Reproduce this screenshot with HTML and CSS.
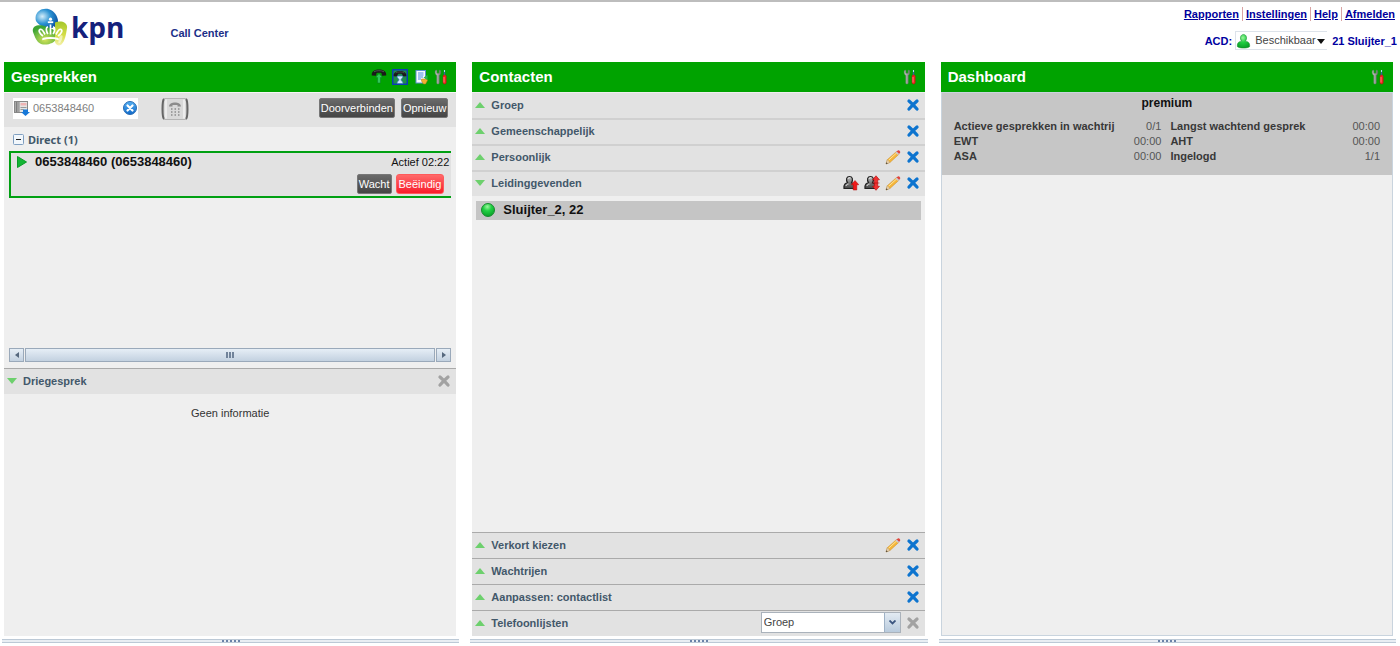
FILE: index.html
```html
<!DOCTYPE html>
<html lang="nl">
<head>
<meta charset="utf-8">
<title>KPN Call Center</title>
<link rel="stylesheet" href="styles.css">
</head>
<body>
<svg class="sprite" width="0" height="0" aria-hidden="true">
  <defs>
    <linearGradient id="g-blue" x1="0" y1="0" x2="0" y2="1"><stop offset="0" stop-color="#55b0f2"/><stop offset="1" stop-color="#0f68c8"/></linearGradient>
    <linearGradient id="g-steel" x1="0" y1="0" x2="1" y2="0"><stop offset="0" stop-color="#d0d0d0"/><stop offset="1" stop-color="#777"/></linearGradient>
    <linearGradient id="g-person" x1="0" y1="0" x2="0" y2="1"><stop offset="0" stop-color="#bbb"/><stop offset="1" stop-color="#444"/></linearGradient>
    <radialGradient id="g-green" cx=".45" cy=".25" r=".8"><stop offset="0" stop-color="#9df59d"/><stop offset=".4" stop-color="#22d044"/><stop offset="1" stop-color="#069a24"/></radialGradient>
    <radialGradient id="g-logo-blue" cx=".3" cy=".4" r=".75"><stop offset="0" stop-color="#d4eefa"/><stop offset=".5" stop-color="#2b93d3"/><stop offset="1" stop-color="#0a4fa0"/></radialGradient>
    <radialGradient id="g-logo-green" cx=".5" cy=".75" r=".65"><stop offset="0" stop-color="#d3e35a"/><stop offset="1" stop-color="#3da435"/></radialGradient>
    <linearGradient id="g-logo-lime" x1="0" y1="0" x2="0" y2="1"><stop offset="0" stop-color="#a4c72c"/><stop offset=".6" stop-color="#d8df4a"/><stop offset="1" stop-color="#f6f2b0"/></linearGradient>
  </defs>
  <symbol id="i-tools" viewBox="0 0 14 16">
    <path d="M1.500 1.500C.8 3.500 1.200 5.400 2.800 6.400V14c0 1.400 2.400 1.400 2.400 0V6.400C6.800 5.300 7 3.500 6.500 1.500L5.200 1.200v3H2.800v-3z" fill="url(#g-steel)" stroke="#6b7a6b" stroke-width=".5"/>
    <path d="M10.500 1v6" stroke="#3a5f9a" stroke-width="1.400"/><path d="M10.500 1v2" stroke="#a8e8e8"/>
    <rect x="9" y="6" width="3.200" height="9" rx="1.400" fill="#f3231f" stroke="#b01515" stroke-width=".5"/><path d="M10 8v5.500" stroke="#ff9a90" stroke-width=".8"/>
  </symbol>
  <symbol id="i-close" viewBox="0 0 14 14">
    <path d="M3 3C4.800 4.500 9.200 9 11 11M11 3C9.200 4.500 4.800 9 3 11" fill="none" stroke="currentColor" stroke-width="3.300" stroke-linecap="round"/>
  </symbol>
  <symbol id="i-pencil" viewBox="0 0 16 16">
    <path d="M1 15l1.300-4.300L11.500 2.500l2.500 2.700-9 8.200z" fill="#f5b63a" stroke="#c98a2a" stroke-width=".5"/>
    <path d="M3.500 11.300l8.800-8" stroke="#ffe49a" stroke-width="1"/>
    <path d="M1 15l1.300-4.300 2.700 2.700z" fill="#e9d2b0" stroke="#a98f66" stroke-width=".4"/><path d="M1 15l.5-1.700 1.200 1.100z" fill="#333"/>
    <path d="M11.300 2.700l1.500-1.300c1.200-.8 3.200 1.300 2.200 2.600l-1.300 1.300z" fill="#e0463e"/><path d="M10.500 3.400l1.200-1 2.500 2.600-1.200 1.100z" fill="#c9c9d4"/>
  </symbol>
  <symbol id="i-user" viewBox="0 0 16 16">
    <path d="M1 13.500C.6 9.500 2.500 8 4.600 7.800 2.500 4.500 3.600 1.500 6.500 1.500S10.400 4.500 8.500 7.800c2.500.2 3.600 2.200 3.500 5.700z" fill="url(#g-person)" stroke="#222" stroke-width="1.200"/>
    <path d="M5 3.800c.5-1 1.500-1.200 2.300-.8M3 11c.3-1.500 1.200-2 2.500-2" stroke="#eee" fill="none"/>
  </symbol>
  <symbol id="i-handset" viewBox="0 0 16 8">
    <path d="M.8 6.500C.2 2.500 4 .6 8 .6s7.800 1.900 7.200 5.900l-4.200.3-.6-2.800C9 3.600 7 3.600 5.600 4L5 6.800z" fill="#1a1a1a"/><path d="M3 2.800c2-1.400 7.500-1.600 10 0" stroke="#666" fill="none" stroke-width=".7"/>
  </symbol>
</svg>

<header class="topbar">
  <div class="brand">
    <svg class="brand-mark" viewBox="0 0 36 38" aria-hidden="true">
      <path d="M4 13C1.500 4 10-.8 17 1.200 24 3.200 28.500 13 24.500 18 20 22 8 20 4 13z" fill="url(#g-logo-blue)"/>
      <path d="M1 24C-.5 18 6 15.500 14 18.500 22 21 27 24 25 30 22 37 10 38.500 6 34 3.500 31 2.500 28 1 24z" fill="url(#g-logo-green)"/>
      <path d="M23 14.500C29 12 36 14.500 35 20 34 27 33 33 29.500 36.500 26 39 22.500 36.500 23 32z" fill="url(#g-logo-lime)"/>
      <path d="M27.500 28c2-1.500 3.500-1 3 1-.5 2.500-1 4-2 5.500-1.500 1.500-2.500.5-2-1z" fill="#fff" opacity=".55"/>
      <path d="M10.500 30c5-1.400 11-1.400 16 0l.4 2.200c-5-1.600-11.800-1.600-16.800 0z" fill="#fff"/>
      <path d="M11 28C7.500 25.500 6 22.500 8.300 21.300c2-.6 3 2.200 4.700 5.200M15.800 26.200c-2-4-2-6.800.2-7.400M21.200 26.200c2-4 2-6.800-.2-7.400M26 28c3.500-2.500 5-5.500 2.700-6.700-2-.6-3 2.200-4.700 5.200M18.500 26.500v-10" fill="none" stroke="#fff" stroke-width="1.700"/>
      <path d="M15.800 14.200h5.400" stroke="#fff" stroke-width="1.800"/>
      <circle cx="18.500" cy="11.200" r="1.600" fill="#fff"/>
    </svg>
    <span class="brand-name">kpn</span>
    <span class="product">Call Center</span>
  </div>
  <div class="session">
    <nav class="links">
      <a href="#">Rapporten</a><a href="#">Instellingen</a><a href="#">Help</a><a href="#">Afmelden</a>
    </nav>
    <div class="acd">
      <label for="acd-status">ACD:</label>
      <span class="status">
        <svg class="status-person" viewBox="0 0 16 16" aria-hidden="true"><path d="M1.500 14C1 9.500 3.500 8.500 6 8.200 3.500 5 5 1 8 1s4.500 4 2 7.200c2.500.3 5 1.300 4.500 5.800-2 2-11 2-13 0z" fill="url(#g-green)" stroke="#168b2a" stroke-width=".6"/></svg>
        <select id="acd-status"><option>Beschikbaar</option></select>
        <svg class="status-arrow" viewBox="0 0 8 5" aria-hidden="true"><path d="M0 0h8L4 5z" fill="#111"/></svg>
      </span>
      <span class="agent">21 Sluijter_1</span>
    </div>
  </div>
</header>

<main class="columns">
  <section class="column">
    <div class="panel">
      <header class="panel-head">
        <h2>Gesprekken</h2>
        <div class="head-icons">
          <button class="icon-btn" aria-label="Opnemen"><svg class="ic16" viewBox="0 0 16 16"><use href="#i-handset" width="16" height="8"/><path d="M8 4.500l3.500 4h-2V14h-3V8.500h-2z" fill="#2fc957" stroke="#087a20" stroke-width=".5"/></svg></button>
          <button class="icon-btn" aria-label="In wacht"><svg class="ic16" viewBox="0 0 16 16"><rect x=".75" y=".75" width="14.500" height="14.500" fill="#1f8f4a" stroke="#0a3cb4" stroke-width="1.500"/><use href="#i-handset" x="1" y="1.500" width="14" height="7"/><path d="M5 7h6c0 2.200-2 2.700-2 3.800s2 1.500 2 3.700H5c0-2.200 2-2.700 2-3.700S5 9.200 5 7z" fill="#cfe8ff" stroke="#3a74c0" stroke-width=".7"/></svg></button>
          <button class="icon-btn" aria-label="Notities"><svg class="ic16" viewBox="0 0 16 16"><rect x="3" y="1.500" width="9.500" height="12.500" fill="#f4f9ff" stroke="#5d8fd0"/><path d="M5 4h5.500M5 6h5.500M5 8h5M5 10h3" stroke="#4b8add"/><path d="M8.500 10h5l1 1.500-2 3.500h-2l-2-3z" fill="#f0b030" stroke="#b87810" stroke-width=".5"/><path d="M10.500 8.500l4-2.500v5z" fill="#2bb34a"/></svg></button>
          <button class="icon-btn tools" aria-label="Opties"><svg class="ic-tools"><use href="#i-tools"/></svg></button>
        </div>
      </header>
      <div class="panel-body">
        <div class="dialbar">
          <div class="dial">
            <svg class="ic16" viewBox="0 0 16 16" aria-hidden="true"><rect x=".5" y="1.500" width="13" height="11" fill="#e4e4e4" stroke="#888"/><path d="M1 2h3.500v10H1z" fill="#aaa"/><path d="M2.700 2v10M5 2v10" stroke="#666" stroke-width=".8"/><path d="M6.500 3h6v2.500h-6z" fill="#eeb4b4"/><path d="M6.500 7.500h6M6.500 9.500h3" stroke="#999"/><path d="M9 9.500h5V12h2l-4.500 4L7 12h2z" fill="#1878d8"/></svg>
            <input type="text" value="0653848460" aria-label="Telefoonnummer">
            <button class="icon-btn" aria-label="Wissen"><svg class="ic14" viewBox="0 0 14 14"><circle cx="7" cy="7" r="6.500" fill="url(#g-blue)" stroke="#2a6db5"/><path d="M4.500 4.500l5 5M9.500 4.500l-5 5" stroke="#fff" stroke-width="2.200" stroke-linecap="round"/></svg></button>
          </div>
          <button class="keypad" aria-label="Bellen"><svg viewBox="0 0 28 22"><rect x="2" y=".5" width="24" height="21" rx="2" fill="#d9d9d9" stroke="#b4b4b4"/><path d="M3 1C1 3 1 19 3 21M25 1c2 2 2 18 0 20" fill="none" stroke="#666" stroke-width="2"/><path d="M5 1.500v19M23 1.500v19" stroke="#f2f2f2" stroke-width="1.500"/><path d="M8 8.500C8 3 20 3 20 8.500h-3.500V7h-5v1.500z" fill="#8c8c8c"/><path d="M10 11h9M10 14h9M10 17h9" stroke="#8c8c8c" stroke-width="1.500" stroke-dasharray="1.500 2"/></svg></button>
          <div class="dial-actions">
            <button class="btn">Doorverbinden</button>
            <button class="btn">Opnieuw</button>
          </div>
        </div>
        <div class="calls">
          <div class="group">
            <button class="icon-btn" aria-label="Inklappen"><svg class="ic-fold" viewBox="0 0 11 11"><rect x=".5" y=".5" width="10" height="10" rx="1" fill="#f2f7fc" stroke="#7f9fc0"/><path d="M3 5.500h5" stroke="#222"/></svg></button>
            <span>Direct (1)</span>
          </div>
          <article class="call">
            <div class="call-row">
              <svg class="ic-play" viewBox="0 0 10 12" aria-hidden="true"><path d="M.5.5L9.500 6 .5 11.500z" fill="#12b534" stroke="#0a9a28"/></svg>
              <strong>0653848460 (0653848460)</strong>
              <span class="call-time">Actief 02:22</span>
            </div>
            <div class="call-actions">
              <button class="btn">Wacht</button>
              <button class="btn danger">Beëindig</button>
            </div>
          </article>
        </div>
        <div class="hscroll">
          <button aria-label="Naar links"><svg viewBox="0 0 4 6"><path d="M4 0v6L0 3z" fill="#56687e"/></svg></button>
          <span class="thumb"><i></i><i></i><i></i></span>
          <button aria-label="Naar rechts"><svg viewBox="0 0 4 6"><path d="M0 0v6l4-3z" fill="#56687e"/></svg></button>
        </div>
        <div class="row strong-line">
          <span class="tri down"></span><h3>Driegesprek</h3>
          <div class="row-icons"><button class="icon-btn off" aria-label="Sluiten" disabled><svg class="ic14"><use href="#i-close"/></svg></button></div>
        </div>
        <p class="empty">Geen informatie</p>
      </div>
    </div>
    <div class="splitter"><i></i><i></i><i></i><i></i><i></i></div>
  </section>

  <section class="column">
    <div class="panel">
      <header class="panel-head">
        <h2>Contacten</h2>
        <div class="head-icons"><button class="icon-btn tools" aria-label="Opties"><svg class="ic-tools"><use href="#i-tools"/></svg></button></div>
      </header>
      <div class="panel-body">
        <div class="row first"><span class="tri"></span><h3>Groep</h3>
          <div class="row-icons"><button class="icon-btn x" aria-label="Sluiten"><svg class="ic14"><use href="#i-close"/></svg></button></div></div>
        <div class="row"><span class="tri"></span><h3>Gemeenschappelijk</h3>
          <div class="row-icons"><button class="icon-btn x" aria-label="Sluiten"><svg class="ic14"><use href="#i-close"/></svg></button></div></div>
        <div class="row"><span class="tri"></span><h3>Persoonlijk</h3>
          <div class="row-icons"><button class="icon-btn" aria-label="Bewerken"><svg class="ic16"><use href="#i-pencil"/></svg></button><button class="icon-btn x" aria-label="Sluiten"><svg class="ic14"><use href="#i-close"/></svg></button></div></div>
        <div class="row"><span class="tri down"></span><h3>Leidinggevenden</h3>
          <div class="row-icons">
            <button class="icon-btn" aria-label="Omhoog"><svg class="ic16" viewBox="0 0 16 16"><use href="#i-user" width="16" height="16"/><path d="M12 5.500l3.800 4.200h-2V15h-3.600V9.700h-2z" fill="#f01818" stroke="#b00808" stroke-width=".5"/></svg></button>
            <button class="icon-btn" aria-label="Sorteren"><svg class="ic16" viewBox="0 0 16 16"><use href="#i-user" width="16" height="16"/><path d="M12 .8l3.500 4h-1.800v6.500h1.800L12 15.300l-3.500-4h1.800V4.800H8.500zM8.500 8h7" fill="#f03030" stroke="#b00808" stroke-width=".6"/></svg></button>
            <button class="icon-btn" aria-label="Bewerken"><svg class="ic16"><use href="#i-pencil"/></svg></button>
            <button class="icon-btn x" aria-label="Sluiten"><svg class="ic14"><use href="#i-close"/></svg></button>
          </div></div>
        <ul class="contacts">
          <li><svg class="ic14" viewBox="0 0 14 14" aria-hidden="true"><circle cx="7" cy="7" r="6.500" fill="url(#g-green)" stroke="#1a8a30"/></svg><strong>Sluijter_2, 22</strong></li>
        </ul>
        <div class="row strong-line"><span class="tri"></span><h3>Verkort kiezen</h3>
          <div class="row-icons"><button class="icon-btn" aria-label="Bewerken"><svg class="ic16"><use href="#i-pencil"/></svg></button><button class="icon-btn x" aria-label="Sluiten"><svg class="ic14"><use href="#i-close"/></svg></button></div></div>
        <div class="row strong-line"><span class="tri"></span><h3>Wachtrijen</h3>
          <div class="row-icons"><button class="icon-btn x" aria-label="Sluiten"><svg class="ic14"><use href="#i-close"/></svg></button></div></div>
        <div class="row strong-line"><span class="tri"></span><h3>Aanpassen: contactlist</h3>
          <div class="row-icons"><button class="icon-btn x" aria-label="Sluiten"><svg class="ic14"><use href="#i-close"/></svg></button></div></div>
        <div class="row strong-line"><span class="tri"></span><h3><label for="phonelist">Telefoonlijsten</label></h3>
          <div class="row-icons">
            <span class="combo"><select id="phonelist"><option>Groep</option></select><span class="combo-arrow"><svg viewBox="0 0 7 5" aria-hidden="true"><path d="M.5.5l3 3 3-3" fill="none" stroke="#3c5680" stroke-width="1.800"/></svg></span></span>
            <button class="icon-btn off" aria-label="Sluiten" disabled><svg class="ic14"><use href="#i-close"/></svg></button>
          </div></div>
      </div>
    </div>
    <div class="splitter"><i></i><i></i><i></i><i></i><i></i></div>
  </section>

  <section class="column">
    <div class="panel">
      <header class="panel-head">
        <h2>Dashboard</h2>
        <div class="head-icons"><button class="icon-btn tools" aria-label="Opties"><svg class="ic-tools"><use href="#i-tools"/></svg></button></div>
      </header>
      <div class="panel-body framed">
        <div class="queue">
          <h3>premium</h3>
          <table>
            <tr><th>Actieve gesprekken in wachtrij</th><td>0/1</td><th>Langst wachtend gesprek</th><td>00:00</td></tr>
            <tr><th>EWT</th><td>00:00</td><th>AHT</th><td>00:00</td></tr>
            <tr><th>ASA</th><td>00:00</td><th>Ingelogd</th><td>1/1</td></tr>
          </table>
        </div>
      </div>
    </div>
    <div class="splitter"><i></i><i></i><i></i><i></i><i></i></div>
  </section>
</main>
</body>
</html>
```

FILE: styles.css
```css
* { box-sizing: border-box; }

body {
  margin: 0;
  min-height: 100vh;
  display: flex;
  flex-direction: column;
  border-top: 2px solid #bdbdbd;
  background: #fff;
  color: #222;
  font: 11px/14px "Liberation Sans", Arial, sans-serif;
}

h2, h3, p, ul { margin: 0; padding: 0; }
svg { display: block; }
.sprite { position: absolute; }
button, input, select { font: inherit; color: inherit; }

.icon-btn { display: block; padding: 0; border: 0; background: none; }
.ic16 { width: 16px; height: 16px; }
.ic14 { width: 14px; height: 14px; }
.ic-tools { width: 14px; height: 16px; }
.ic-fold { width: 11px; height: 11px; }
.ic-play { width: 10px; height: 12px; }
.x { color: #0d74cf; }
.off { color: #a2a2a2; }

/* Top bar */
.topbar { display: flex; justify-content: space-between; height: 60px; }
.brand { display: flex; align-items: flex-start; padding: 6px 0 0 32px; }
.brand-mark { width: 36px; height: 38px; }
.brand-name {
  margin-left: 3px;
  color: #14207c;
  font: bold 28px/38px "Open Sans", sans-serif;
}
.product { margin: 18px 0 0 46px; color: #1c2f88; font-weight: bold; }
.session { display: flex; flex-direction: column; align-items: flex-end; padding: 5px 3px 0 0; }
.links { display: flex; padding-right: 2px; }
.links a { color: #00009c; font-weight: bold; }
.links a + a { margin-left: 3px; padding-left: 3px; border-left: 1px solid #d9a3a3; }
.acd { display: flex; align-items: center; margin-top: 10px; color: #0000a0; font-weight: bold; }
.status {
  position: relative;
  display: flex;
  align-items: center;
  width: 92px;
  height: 19px;
  margin: 0 5px 0 3px;
  border: 1px solid #dde3ea;
  border-right: 0;
  color: #444;
  font-weight: normal;
}
.status-person { width: 15px; height: 16px; }
.status select {
  flex: 1;
  min-width: 0;
  padding: 0 0 2px 4px;
  border: 0;
  background: none;
  appearance: none;
}
.status-arrow { position: absolute; right: 2px; top: 7px; width: 8px; height: 5px; pointer-events: none; }

/* Columns */
.columns {
  flex: 1;
  display: grid;
  grid-template-columns: repeat(3, minmax(0, 1fr));
  gap: 11px;
  padding: 0 4px 3px 2px;
}
.column { display: flex; flex-direction: column; }
.panel { flex: 1; display: flex; flex-direction: column; margin: 0 3px 3px 2px; background: #efefef; }
.panel-head {
  display: flex;
  align-items: center;
  justify-content: space-between;
  height: 30px;
  padding: 0 8px 0 7px;
  background: #00a300;
}
.panel-head h2 { color: #fff; font-size: 15px; line-height: 18px; }
.head-icons { display: flex; gap: 5px; }
.panel-body { flex: 1; display: flex; flex-direction: column; }

.splitter {
  display: flex;
  justify-content: center;
  align-items: center;
  gap: 2px;
  height: 4px;
  border: solid #bcc9d6;
  border-width: 1px 0;
  background: #e9eef3;
}
.splitter i { width: 2px; height: 2px; background: #6a82a8; }

/* Accordion rows */
.row {
  display: flex;
  align-items: center;
  height: 26px;
  padding: 0 5px 2px 3px;
  border-top: 2px solid #d0d0d0;
  background: #e2e2e2;
}
.row.first { border-top: 1px solid #efefef; }
.row.strong-line { border-top: 1px solid #aaa; }
.row h3 { margin-left: 6px; color: #42586a; font-size: 11px; }
.row-icons { display: flex; align-items: center; gap: 5px; margin-left: auto; }
.tri { border: solid transparent; border-width: 0 5px 6px; border-bottom-color: #6dd06d; }
.tri.down { border-width: 6px 5px 0; border-top-color: #6dd06d; }

/* Calls */
.dialbar {
  display: flex;
  align-items: flex-start;
  height: 35px;
  padding: 5px 8px 0 9px;
  border-top: 1px solid #f6f6f6;
  background: #e2e2e2;
}
.dial { display: flex; align-items: center; width: 125px; height: 21px; padding: 0 1px 2px; background: #fff; }
.dial input {
  flex: 1;
  min-width: 0;
  padding: 0 0 0 3px;
  border: 0;
  background: none;
  color: #808080;
}
.keypad { margin-left: 23px; padding: 0; border: 0; background: none; }
.keypad svg { width: 28px; height: 22px; }
.dial-actions { display: flex; gap: 6px; margin-left: auto; }
.btn {
  height: 20px;
  padding: 0 1px;
  border: 1px solid #777;
  border-radius: 2px;
  background: linear-gradient(#6a6a6a, #454545);
  color: #fff;
}
.btn.danger { padding: 0 2px; border-color: #ff5a5a; background: linear-gradient(#ff6a6a, #f91d2b); border-radius: 3px; }
.calls { flex: 0 0 221px; padding: 3px 5px 0; }
.group {
  display: flex;
  align-items: center;
  gap: 4px;
  height: 21px;
  padding: 0 0 2px 4px;
  color: #42586a;
  font: bold 11px/16px "Noto Sans", sans-serif;
}
.call {
  height: 47px;
  padding: 1px 2px 0 6px;
  border: 2px solid #00a012;
  border-right: 0;
  background: #e2e2e2;
}
.call-row { display: flex; align-items: center; height: 16px; color: #111; }
.call-row strong { margin-left: 8px; font-size: 13px; }
.call-time { margin-left: auto; }
.call-actions { display: flex; justify-content: flex-end; gap: 4px; padding: 4px 5px 0 0; }

.hscroll { display: flex; gap: 1px; height: 14px; margin: 0 5px 6px; }
.hscroll button, .thumb {
  display: flex;
  align-items: center;
  justify-content: center;
  border: 1px solid #9aa9ba;
  background: linear-gradient(#e6eef6, #c3d1e0);
}
.hscroll button { width: 15px; padding: 0; }
.hscroll svg { width: 4px; height: 6px; }
.thumb { flex: 1; gap: 1px; }
.thumb i { width: 2px; height: 6px; background: #71839a; }
.empty { padding: 12px 0; text-align: center; color: #333; }

/* Contacts */
.contacts { flex: 1; padding: 5px 4px 0; list-style: none; }
.contacts li {
  display: flex;
  align-items: center;
  gap: 8px;
  height: 19px;
  padding: 0 0 1px 5px;
  background: #c5c5c5;
  color: #111;
  font-size: 13px;
}
.combo { position: relative; display: block; width: 140px; height: 21px; }
.combo select {
  width: 100%;
  height: 100%;
  padding: 0 18px 2px 2px;
  border: 1px solid #aab2bb;
  border-radius: 0;
  background: #fff;
  color: #444;
  appearance: none;
}
.combo-arrow {
  position: absolute;
  top: 1px;
  right: 1px;
  bottom: 1px;
  display: flex;
  align-items: center;
  justify-content: center;
  width: 16px;
  border-left: 1px solid #9fb2c6;
  background: linear-gradient(#e3ebf3, #b9cbdd);
  pointer-events: none;
}
.combo-arrow svg { width: 7px; height: 5px; }

/* Dashboard */
.framed { border: 1px solid #c9d4de; }
.queue { height: 82px; padding: 3px 4px 0; background: #c6c6c6; }
.queue h3 { color: #111; font-size: 12px; text-align: center; }
.queue table { width: 100%; margin-top: 9px; border-collapse: collapse; table-layout: fixed; }
.queue th, .queue td { padding: 0 8px; line-height: 15px; color: #555; }
.queue th { width: 38%; text-align: left; color: #383838; white-space: nowrap; }
.queue td { width: 11%; padding: 0 1px 0 0; text-align: right; }
.queue td:last-child { width: 13%; padding-right: 8px; }
```
